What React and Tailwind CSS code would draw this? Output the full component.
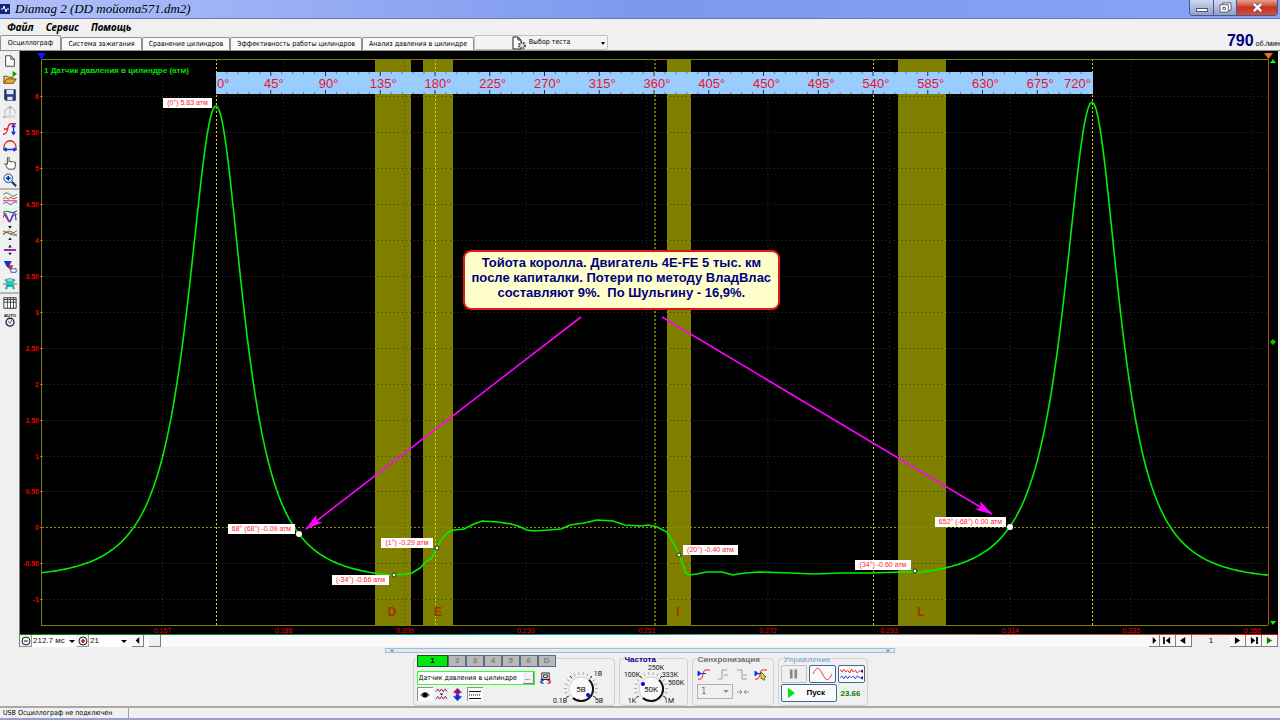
import React, { useState } from 'react';

const menuItems = ['Файл', 'Сервис', 'Помощь'];

const tabs = [
  { name: 'Осциллограф', width: 'w-[61px]' },
  { name: 'Система зажигания', width: 'w-[81px]' },
  { name: 'Сравнение цилиндров', width: 'w-[88px]' },
  { name: 'Эффективность работы цилиндров', width: 'w-[132px]' },
  { name: 'Анализ давления в цилиндре', width: 'w-[112px]' },
];

const BASE_Y = 527;
const UNIT = 72;

const bands = [
  { letter: 'D', x: 375, width: 36, tx: 392 },
  { letter: 'E', x: 423, width: 30, tx: 438 },
  { letter: 'I', x: 667, width: 24, tx: 678 },
  { letter: 'L', x: 898, width: 48, tx: 921 },
];

const strokes = [216.5, 435.5, 655, 873.5, 1092.5];

const timeLabels = ['0.167', '0.188', '0.209', '0.230', '0.251', '0.272', '0.293', '0.314', '0.335', '0.356'];

const marks = [
  { text: '(0°) 5.83 атм', x: 163, y: 98, width: 49, px: 216, py: 107, hidden: true },
  { text: '68° (68°) -0.09 атм', x: 228, y: 524, width: 67, px: 299, py: 534, big: true },
  { text: '(-34°) -0.66 атм', x: 332, y: 575, width: 57, px: 394, py: 575 },
  { text: '(1°) -0.29 атм', x: 381, y: 538, width: 52, px: 437, py: 548 },
  { text: '(20°) -0.40 атм', x: 683, y: 545, width: 55, px: 679, py: 555 },
  { text: '(34°) -0.60 атм', x: 855, y: 560, width: 56, px: 915, py: 571 },
  { text: '652° (-68°) 0.00 атм', x: 935, y: 517, width: 71, px: 1010, py: 527, big: true },
];

// intake / exhaust part of the cycle, between the two compression peaks
const valley = [
  [394, 575], [407, 574], [412, 573], [420, 568], [427, 561], [431, 559], [437, 548], [441, 540],
  [446, 534], [450, 531], [455, 530], [464, 529], [474, 524], [482, 521], [498, 522], [511, 524],
  [518, 526], [527, 530], [534, 531], [549, 530], [561, 529], [570, 525], [584, 523], [597, 520],
  [613, 521], [625, 525], [640, 526], [648, 525], [657, 527], [667, 532], [674, 544], [681, 560],
  [686, 573], [689, 575], [697, 574], [706, 572], [722, 572], [733, 575], [745, 573], [760, 572],
  [790, 573], [815, 574], [840, 573], [870, 573], [902, 572], [914, 572],
];

// polytropic compression around top dead centre
const pressure = (dx, peak, ratio) => {
  const a = (dx * 0.822 * Math.PI) / 180;
  const volume = 1 + ratio * (1 - Math.cos(a) + Math.sin(a) ** 2 / 7);
  return peak / volume ** 1.3 - 1;
};

const buildCurve = () => {
  const points = [];
  for (let x = 41; x < 394; x += 2) {
    points.push([x, BASE_Y - UNIT * pressure(x - 216, 6.85, x < 216 ? 4.6 : 5)]);
  }
  points.push(...valley);
  for (let x = 916; x <= 1268; x += 2) {
    points.push([x, BASE_Y - UNIT * pressure(x - 1092, 6.9, x < 1092 ? 4.6 : 5)]);
  }
  return points.map(([x, y]) => `${x},${y.toFixed(1)}`).join(' ');
};

const yTicks = Array.from({ length: 15 }, (_, i) => {
  const value = 6 - i * 0.5;
  return { y: Math.round(96 + i * 35.95) + 0.5, label: Number.isInteger(value) ? String(value) : value.toFixed(2) };
});

const Chart = () => (
  <svg viewBox="20 51 1258 583" className="block w-full h-auto bg-black" role="img" aria-label="Давление в цилиндре">
    <defs>
      <marker id="arrow" viewBox="0 0 18 10" refX="17" refY="5" markerWidth="18" markerHeight="10" markerUnits="userSpaceOnUse" orient="auto">
        <path d="M0 0 18 5 0 10 4 5Z" fill="#ff00ff" />
      </marker>
    </defs>
    {bands.map((b) => (
      <rect key={b.letter} x={b.x} y="59" width={b.width} height="566" fill="#808000" />
    ))}
    <g stroke="#343434" strokeDasharray="1 3">
      {yTicks.map((t) => (
        <line key={t.y} x1="42" x2="1268" y1={t.y} y2={t.y} />
      ))}
      {timeLabels.map((t, i) => (
        <line key={t} x1={162.5 + i * 121.1} x2={162.5 + i * 121.1} y1="62" y2="625" />
      ))}
    </g>
    <line x1="42" x2="1268" y1="527.5" y2="527.5" stroke="#909000" strokeDasharray="2 2" />
    <g stroke="#d8d800" strokeDasharray="2 2">
      {strokes.map((x) => (
        <line key={x} x1={x} x2={x} y1="59" y2="625" />
      ))}
    </g>
    <path d="M41.5 625V59.5H1268M41 625.5h1227" fill="none" stroke="#808000" />
    <line x1="1268.5" x2="1268.5" y1="56" y2="625" stroke="#b04a10" />
    <g fill="#f00000" fontFamily="Liberation Sans, sans-serif" fontSize="7">
      {yTicks.map((t) => (
        <text key={t.y} x="39" y={t.y + 2} textAnchor="end" fontWeight="bold">{t.label}</text>
      ))}
      {timeLabels.map((t, i) => (
        <text key={t} x={162.5 + i * 121.1} y="633" textAnchor="middle">{t}</text>
      ))}
    </g>
    <g stroke="#808000">
      {yTicks.map((t) => (
        <line key={t.y} x1="40" x2="43" y1={t.y} y2={t.y} />
      ))}
    </g>
    {bands.map((b) => (
      <text key={b.letter} x={b.tx} y="616" textAnchor="middle" fill="#a83000" fontFamily="Liberation Sans, sans-serif" fontSize="12" fontWeight="bold">
        {b.letter}
      </text>
    ))}
    <text x="44" y="73" fill="#00e000" fontFamily="Liberation Sans, sans-serif" fontSize="8" fontWeight="bold">
      1 Датчик давления в цилиндре (атм)
    </text>

    {/* Crank angle ruler */}
    <rect x="216" y="72" width="877" height="22" fill="#99ccff" />
    {Array.from({ length: 79 }, (_, i) => {
      const x = 216 + (i + 1) * 10.95;
      const major = (i + 1) % 5 === 0;
      return (
        <path
          key={i}
          d={`M${x} 72v${major ? 4 : 2}M${x} 94v${major ? -4 : -2}`}
          stroke={major ? '#203040' : '#5c7a99'}
        />
      );
    })}
    <g fill="#f0102a" fontFamily="Liberation Sans, sans-serif" fontSize="13">
      <text x="217" y="88">0°</text>
      {Array.from({ length: 15 }, (_, i) => (
        <text key={i} x={219 + (i + 1) * 54.75} y="88" textAnchor="middle">{(i + 1) * 45}°</text>
      ))}
      <text x="1091" y="88" textAnchor="end">720°</text>
    </g>

    <polyline points={buildCurve()} fill="none" stroke="#00f000" strokeWidth="1.6" />

    {/* Measured points */}
    {marks.map((m) => (
      <g key={m.text}>
        <rect x={m.x} y={m.y} width={m.width} height="10" fill="#fff" />
        <text x={m.x + m.width / 2} y={m.y + 7} textAnchor="middle" fill="#ff2030" fontFamily="Liberation Sans, sans-serif" fontSize="7">
          {m.text}
        </text>
        {m.hidden ? (
          <path d="M213 110 216.500 107l3 3" fill="none" stroke="#008000" />
        ) : (
          <circle cx={m.px} cy={m.py} r={m.big ? 3 : 2} fill="#fff" stroke="#222" strokeWidth={m.big ? 0 : 1} />
        )}
      </g>
    ))}

    <g stroke="#ff00ff" strokeWidth="1.6">
      <line x1="581" y1="317" x2="306" y2="529" markerEnd="url(#arrow)" />
      <line x1="662" y1="317" x2="992" y2="514" markerEnd="url(#arrow)" />
    </g>

    <path d="M37 53h9l-4.500 7Z" fill="#1414e6" />
    <path d="M1264 53h9l-4.500 6Z" fill="#f07020" />
    <path d="M1270 63h6l-3-4Z" fill="#00ff00" />
    <path d="M1270 342l3-3 3 3-3 3Z" fill="#00c800" />
    <path d="M1270 621h6l-3 4Z" fill="#00ff00" />
  </svg>
);

const Icon = ({ children }) => (
  <svg viewBox="0 0 16 16" width="14" height="14" fill="none">{children}</svg>
);

const toolIcons = [
  ['Новый', <path d="M3 2h6l4 4v8H3ZM9 2v4h4" fill="#fff" stroke="#333" />],
  ['Открыть', <><path d="M1 14V6h4l1 1h5v2" fill="#f8d060" stroke="#604000" /><path d="M1 14l3-5h11l-3 5Z" fill="#f0a830" stroke="#604000" /><path d="M11 0l5 3-5 4Z" fill="#00a000" /></>],
  ['Сохранить', <><path d="M2 2h12v12H3l-1-1Z" fill="#30358a" stroke="#181c50" /><path d="M4 2h8v5H4ZM5 10h6v4H5Z" fill="#dfe6f5" /></>],
  ['Авто', <><path d="M2 10C2 5 5 3 8 3s6 2 6 7M8 1v9M5 4l3-3 3 3" stroke="#a8a8a8" /><text x="0" y="15" fontSize="5" fill="#999" fontFamily="Liberation Sans">AUTO</text></>],
  ['Амплитуда', <><path d="M0 14c8 0 3-11 9-12h6M1 8h5" stroke="#e02020" strokeWidth="1.5" /><path d="M12 4v9M10 6l2-3 2 3M10 11l2 3 2-3" stroke="#1030e0" strokeWidth="1.5" /></>],
  ['Период', <><path d="M1 11C1 4 5 2 8 2s7 2 7 9" stroke="#e02020" strokeWidth="1.5" /><path d="M2 12h12M4 10l-3 2 3 2M12 10l3 2-3 2" stroke="#1030e0" strokeWidth="1.5" /></>],
  ['Рука', <path d="M6 15l-4-6 1-1 2 2V2l1-1 1 1v5l1-1 2 1 1-1 1 1 2 0v5l-1 3Z" fill="#fff" stroke="#333" />],
  ['Лупа', <><circle cx="6" cy="6" r="5" fill="#c8e8ff" stroke="#204070" /><path d="M3.500 6h5M6 3.500v5" stroke="#0020a0" strokeWidth="1.5" /><path d="M10 10l5 5" stroke="#204060" strokeWidth="2.500" /></>],
  ['Каналы', <><path d="M0 3q4-4 8 0t8-1" stroke="#208040" /><path d="M0 8l3-2 3 2 3-2 3 2 4-2M0 10h16" stroke="#e02020" /><path d="M0 14q3-4 6-1t5 0 5-1" stroke="#2040e0" /></>],
  ['Наложение', <><path d="M0 4c6-5 9 4 16-2" stroke="#208040" strokeWidth="1.3" /><path d="M0 10c3-10 6 11 9 3s4-6 7-7" stroke="#e02020" strokeWidth="1.3" /><path d="M1 7c2-9 5 13 8 5s4-14 6 1" stroke="#2040e0" strokeWidth="1.3" /></>],
  ['Сжать', <><path d="M0 11C5 4 9 4 16 12M0 6c5 0 9 6 16 4" stroke="#208040" /><path d="M0 9c5-5 8 4 16-4" stroke="#e02020" /><path d="M6 0h4L8 3ZM6 16h4l-2-3Z" fill="#111" /></>],
  ['Курсор', <><path d="M1 8h14" stroke="#8010a0" strokeWidth="2" /><path d="M6 5h4L8 2ZM6 11h4l-2 3Z" fill="#111" /></>],
  ['Фильтр', <><path d="M1 1h9L7 7v3L4 7Z" fill="#1030d0" /><path d="M6 6l6 0-4 6Z" fill="#e02020" /><path d="M9 10h6v4H9Z" fill="#fff" stroke="#2040a0" /></>],
  ['Маркеры', <><path d="M2 2l4 2h4l4-2-2 6 2 6h-3l-1-3H6l-1 3H2l2-6Z" fill="#20c8c8" /><path d="M2 4q6-4 12 0M4 10h8" stroke="#208040" /><path d="M0 8h4M12 8h4" stroke="#e02020" /></>],
  ['Таблица', <><path d="M1 2h14v12H1Z" fill="#fff" stroke="#222" /><path d="M1 4h14M1 7h14M5 2v12M8.500 2v12M12 2v12" stroke="#333" /></>],
  ['Авто замер', <><text x="1" y="5" fontSize="5" fontWeight="bold" fill="#111" fontFamily="Liberation Sans">AUTO</text><circle cx="8" cy="10.500" r="4.500" stroke="#222" strokeWidth="1.500" /><path d="M6 9l2 3 2-4" stroke="#2060d0" /></>],
];

const Toolbar = () => (
  <aside className="w-5 shrink-0 pt-px bg-[#f0f0f0] border-r border-[#808080]">
    {toolIcons.map(([label, art], index) => (
      <div key={label} className={index === 8 || index === 14 ? 'border-t-2 border-[#b8b8b8]' : ''}>
        <button aria-label={label} className="flex w-full h-[17px] items-center justify-center">
          <Icon>{art}</Icon>
        </button>
      </div>
    ))}
  </aside>
);

const Dial = ({ width, cx, value, labels, pointer }) => (
  <svg viewBox={`0 0 ${width} 50`} width={width} height="50" className="shrink-0 overflow-visible" fontFamily="Roboto, sans-serif" fontSize="7" fill="#111">
    {Array.from({ length: 16 }, (_, i) => {
      const a = ((150 + i * 16) * Math.PI) / 180;
      return (
        <line
          key={i}
          x1={cx + 14 * Math.cos(a)}
          y1={30 + 14 * Math.sin(a)}
          x2={cx + 17 * Math.cos(a)}
          y2={30 + 17 * Math.sin(a)}
          stroke={i % 5 === 0 ? '#111' : '#a8a8a8'}
        />
      );
    })}
    <circle cx={cx} cy="30" r="12" fill="#fafafa" stroke="#d0d0d0" />
    <path d={`M${cx + 8} 21a12 12 0 0 1 -16 18`} fill="none" stroke="#111" strokeWidth="2" />
    <circle cx={cx + pointer[0]} cy={30 + pointer[1]} r="2" fill="#0000f0" />
    <text x={cx} y="33" fontSize="8" textAnchor="middle">{value}</text>
    {labels.map((l) => (
      <text key={l.t} x={l.x} y={l.y} textAnchor="middle">{l.t}</text>
    ))}
  </svg>
);

const Group = ({ title, titleClass, className, children }) => (
  <fieldset className={`relative h-12 min-w-0 border border-[#d0d0d0] rounded-sm ${className}`}>
    {title && (
      <legend className={`absolute -top-1 left-1 px-px bg-[#f0f0f0] font-['Liberation_Sans',sans-serif] text-[8px] leading-[9px] font-bold ${titleClass}`}>{title}</legend>
    )}
    {children}
  </fieldset>
);

const ControlPanel = () => {
  const [channel, setChannel] = useState('1');

  return (
    <section className="flex justify-center gap-1 pt-1 h-[51px]">
      <Group className="w-[202px] flex">
        <div className="w-[142px] shrink-0 pl-[3px] -mt-1">
          <div className="flex">
            {['1', '2', '3', '4', '5', '6', 'D'].map((c) => (
              <button
                key={c}
                onClick={() => setChannel(c)}
                className={`h-3 border font-['Liberation_Sans',sans-serif] text-[8px] leading-[10px] font-bold ${
                  channel === c ? 'w-8 bg-[#00e810] border-[#205020] text-black' : 'w-[18px] bg-[#b8b8b8] border-[#507090] text-[#808080]'
                }`}
              >
                {c}
              </button>
            ))}
          </div>
          <div className="flex items-center gap-1 mt-1">
            <div className="flex w-[118px] h-[14px] border border-[#30ff30] bg-white">
              <input
                aria-label="Датчик"
                defaultValue="Датчик давления в цилиндре"
                className="flex-1 min-w-0 pl-px text-[7px] leading-[12px] text-black bg-white"
              />
              <button aria-label="Выбор датчика" className="w-[11px] bg-[#f0f0f0] border-r border-b border-[#808080] text-[7px] leading-[8px]">...</button>
            </div>
            <button aria-label="Калибровка">
              <svg viewBox="0 0 14 14" width="13" height="13" fill="none">
                <path d="M3 1h8v7H3ZM5 3h4v3H5ZM2 8h10" stroke="#222" />
                <path d="M5 9c-3 0-4 2-2 3h2" stroke="#1030e0" strokeWidth="1.500" />
                <path d="M9 9c4 0 4 2 2 3H9" stroke="#e02020" strokeWidth="1.500" />
              </svg>
            </button>
          </div>
          <div className="flex gap-[2px] mt-[2px]">
            <button aria-label="Видимость" className="w-4 h-[14px] flex items-center justify-center bg-[#fafafa] border-l border-t border-[#909090]">
              <svg viewBox="0 0 12 10" width="12" height="10"><path d="M1 5q5-6 10 0-5 5-10 0Z" fill="#777" /><circle cx="6" cy="5" r="2.500" fill="#000" /></svg>
            </button>
            <button aria-label="Инверсия" className="w-[14px] h-[14px]">
              <svg viewBox="0 0 14 14" width="13" height="13" fill="none"><path d="M1 4l2-3 2 3 2-3 2 3 2-3 2 3M1 12l2-3 2 3 2-3 2 3 2-3 2 3" stroke="#901080" /><path d="M5 6h4L7 8Z" fill="#111" /></svg>
            </button>
            <button aria-label="Смещение" className="w-[14px] h-[14px]">
              <svg viewBox="0 0 14 14" width="13" height="13"><path d="M7 0l5 5H9v2H5V5H2Z" fill="#901080" /><path d="M7 14l5-5H9V7H5v2H2Z" fill="#1030e0" /></svg>
            </button>
            <button aria-label="Линии" className="w-4 h-[14px] flex items-center justify-center bg-[#fafafa] border-l border-t border-[#909090]">
              <svg viewBox="0 0 12 10" width="12" height="10" stroke="#111"><path d="M0 1.500h12M0 8.500h12" /><path d="M0 5h12" strokeDasharray="1 1" /></svg>
            </button>
          </div>
        </div>
        <Dial
          width={56}
          cx={25}
          value="5В"
          pointer={[7, 6]}
          labels={[{ t: '1В', x: 42, y: 17 }, { t: '0.1В', x: 4, y: 44 }, { t: '5В', x: 43, y: 44 }]}
        />
      </Group>

      <Group title="Частота" titleClass="text-[#000080]" className="w-[69px]">
        <Dial
          width={67}
          cx={31}
          value="50K"
          pointer={[-8, -5]}
          labels={[
            { t: '1K', x: 12, y: 44 },
            { t: '100K', x: 12, y: 18 },
            { t: '250K', x: 36, y: 11 },
            { t: '333K', x: 50, y: 18 },
            { t: '500K', x: 56, y: 26 },
            { t: '1M', x: 49, y: 44 },
          ]}
        />
      </Group>

      <Group title="Синхронизация" titleClass="text-[#707070]" className="w-[82px] pt-2 px-1">
        <div className="flex justify-between">
          {['M1 12c6 2 4-8 7-9h5', 'M2 12h4V3h5M8 8h4', 'M2 3h5v9h5M8 8h4', 'M1 12c6 2 4-8 7-9h5'].map((d, index) => {
            const active = index === 0 || index === 3;
            return (
              <button key={index} aria-label={`Синхронизация ${index + 1}`} className="w-[14px] h-[14px]">
                <svg viewBox="0 0 14 14" width="14" height="14" fill="none">
                  <path d={d} stroke={active ? '#e02020' : '#a0a0a0'} />
                  {active && <path d="M1 4l3 2.500-3 2.500ZM4 6.500h5" fill="#1030f0" stroke="#1030f0" />}
                  {index === 3 && <path d="M7 5l5 5-2 0 1 3-2 0-1-2-1 1Z" fill="#f0e000" stroke="#333" strokeWidth="0.600" />}
                </svg>
              </button>
            );
          })}
        </div>
        <div className="flex items-center gap-1 mt-[3px]">
          <div className="relative">
            <select aria-label="Канал синхронизации" className="appearance-none w-9 h-[15px] pl-1 border border-[#b0b0b0] text-[8px] leading-[12px] text-[#606060]">
              <option>1</option>
            </select>
            <span className="absolute right-1 top-[6px] border-x-[3px] border-t-[3px] border-x-transparent border-t-[#909090] pointer-events-none" />
          </div>
          <svg viewBox="0 0 12 8" width="12" height="8" fill="none"><path d="M0 4h5M3 2l2 2-2 2M12 4H7M9 2L7 4l2 2" stroke="#909090" /></svg>
        </div>
      </Group>

      <Group title="Управление" titleClass="text-[#90b0d8]" className="w-[90px] pt-1 px-[2px]">
        <div className="flex gap-[2px] mt-[2px]">
          <button aria-label="Пауза" className="w-[27px] h-[18px] flex items-center justify-center border border-[#c0c0c0] rounded-xs">
            <svg viewBox="0 0 10 10" width="9" height="10"><path d="M1 0h3v10H1ZM6 0h3v10H6Z" fill="#888" /></svg>
          </button>
          <button aria-label="Один канал" className="w-[27px] h-[18px] flex items-center justify-center bg-[#fafafa] border border-[#406890] rounded-xs">
            <svg viewBox="0 0 22 14" width="21" height="14" fill="none"><path d="M1 7c4-8 6-8 10 0s6 8 10 0" stroke="#f03030" /></svg>
          </button>
          <button aria-label="Все каналы" className="w-[27px] h-[18px] flex items-center justify-center bg-[#fafafa] border border-[#406890] rounded-xs">
            <svg viewBox="0 0 24 14" width="23" height="14" fill="none">
              <path d="M0 2l2 3 2-3 2 3 2-2 2 3 2-4 2 3 2-2 2 3 3-3" stroke="#e82020" />
              <path d="M0 11l2-2 2 3 2-3 2 3 2-3 2 2 2-2 2 3 2-3 3 2" stroke="#2040e8" />
              <path d="M24 2v4l-3-2ZM24 9v4l-3-2Z" fill="#1a1a80" />
            </svg>
          </button>
        </div>
        <div className="flex items-center mt-px font-['Liberation_Sans',sans-serif]">
          <button className="w-14 h-[18px] flex items-center gap-3 pl-[6px] bg-[#fafafa] border border-[#406890] rounded-xs text-[8px] leading-[10px] font-bold text-black">
            <svg viewBox="0 0 8 12" width="7" height="12"><path d="M0 0l8 6-8 6Z" fill="#00e810" /></svg>
            Пуск
          </button>
          <output className="flex-1 pt-[2px] text-center text-[8px] leading-[10px] font-bold text-[#008000]">23.66</output>
        </div>
      </Group>
    </section>
  );
};

const NavButton = ({ label, d, green, className }) => (
  <button aria-label={label} className={`h-3 flex items-center justify-center bg-[#f8f8f8] border-r border-b border-[#808080] ${className}`}>
    <svg viewBox="0 0 10 8" width="9" height="7"><path d={d} fill={green ? '#008000' : '#000'} /></svg>
  </button>
);

const ScrollRow = () => (
  <div className="flex h-3 bg-[#fafafa] font-['Liberation_Sans',sans-serif] text-[8px] leading-[12px] text-[#111]">
    <button aria-label="Уменьшить" className="w-3 flex items-center justify-center bg-[#f0f0f0] border-r border-b border-[#999]">
      <svg viewBox="0 0 10 10" width="10" height="10" fill="none"><circle cx="5" cy="5" r="4" stroke="#222" /><path d="M3 5h4" stroke="#1010a0" /></svg>
    </button>
    <select aria-label="Развёртка" className="appearance-none w-[37px] px-px bg-white">
      <option>212.7 мс</option>
    </select>
    <span className="w-2 self-center"><span className="block w-0 border-x-[3px] border-t-[3px] border-x-transparent border-t-black" /></span>
    <button aria-label="Увеличить" className="w-3 flex items-center justify-center bg-[#f0f0f0] border-r border-b border-[#999]">
      <svg viewBox="0 0 10 10" width="10" height="10" fill="none"><circle cx="5" cy="5" r="4" stroke="#222" /><path d="M3 5h4M5 3v4" stroke="#c01010" strokeWidth="1.500" /></svg>
    </button>
    <select aria-label="Масштаб" className="appearance-none w-8 px-px bg-white">
      <option>21</option>
    </select>
    <span className="w-[11px] self-center"><span className="block w-0 border-x-[3px] border-t-[3px] border-x-transparent border-t-black" /></span>
    <NavButton label="Влево" d="M7 0v8L3 4Z" className="w-3" />
    <button aria-label="Ползунок" className="w-3 ml-[5px] bg-[#f0f0f0] border-r border-b border-[#808080]" />
    <div className="flex-1" />
    <NavButton label="Вправо" d="M3 0v8l4-4Z" className="w-[11px]" />
    <NavButton label="В начало" d="M0 0h2v8H0ZM8 0v8L3 4Z" className="w-4" />
    <NavButton label="Назад" d="M7 0v8L1 4Z" className="w-4" />
    <span className="w-[38px] bg-[#f0f0f0] text-center">1</span>
    <NavButton label="Вперёд" d="M2 0v8l6-4Z" className="w-4" />
    <NavButton label="В конец" d="M8 0h2v8H8ZM2 0v8l5-4Z" className="w-4" />
    <NavButton label="Пуск просмотра" green d="M2 0v8l6-4Z" className="w-4" />
  </div>
);

const App = () => {
  const [tab, setTab] = useState('Осциллограф');

  return (
    <div className="min-h-screen overflow-hidden bg-[#f0f0f0] font-['DejaVu_Sans_Condensed','Liberation_Sans',sans-serif] text-[7px] text-black">
      {/* Title bar */}
      <header className="flex items-center justify-between h-[19px] border-b border-[#6878a8] bg-linear-to-r from-[#b0c0fa] via-[#7c98ee] to-[#88a4f8]">
        <div className="flex items-center gap-[5px]">
          <svg viewBox="0 0 10 10" width="10" height="10"><rect width="10" height="10" fill="#102878" /><path d="M1 5h2l1-3 2 6 1-3h2" fill="none" stroke="#fff" /></svg>
          <h1 className="font-['Liberation_Serif',serif] italic text-[13px] leading-[18px]">Diamag 2 (DD тойота571.dm2)</h1>
        </div>
        <div className="flex self-start h-4 mr-[2px] border border-t-0 border-[#485888] rounded-b-sm overflow-hidden">
          <button aria-label="Свернуть" className="w-6 flex items-center justify-center bg-linear-to-b from-[#d0d8f0] to-[#90a0d0] border-r border-[#485888]">
            <span className="block w-3 h-1 mt-1 bg-white border border-[#505868]" />
          </button>
          <button aria-label="Развернуть" className="w-[23px] flex items-center justify-center bg-linear-to-b from-[#d0d8f0] to-[#90a0d0] border-r border-[#485888]">
            <svg viewBox="0 0 14 12" width="13" height="11" fill="#fff" stroke="#505868"><path d="M4 1h9v8H4Z" /><path d="M1 3h9v8H1Z" /><path d="M4 6h3v2H4Z" /></svg>
          </button>
          <button aria-label="Закрыть" className="w-10 flex items-center justify-center bg-linear-to-b from-[#e0a090] via-[#c83020] to-[#d05040]">
            <svg viewBox="0 0 14 12" width="13" height="11"><path d="M3 2l8 8M11 2l-8 8" stroke="#605060" strokeWidth="4" /><path d="M3 2l8 8M11 2l-8 8" stroke="#fff" strokeWidth="2.500" /></svg>
          </button>
        </div>
      </header>

      {/* Menu */}
      <nav className="flex gap-3 h-4 pl-[7px] font-['Noto_Sans',sans-serif] italic font-bold text-[10px] leading-[15px]">
        {menuItems.map((item) => (
          <button key={item}>{item}</button>
        ))}
      </nav>

      {/* Tabs */}
      <div className="flex items-end h-4 border-b border-[#909090]">
        {tabs.map((t) => (
          <button
            key={t.name}
            onClick={() => setTab(t.name)}
            className={`shrink-0 border border-b-0 border-[#909090] rounded-t-xs leading-[12px] whitespace-nowrap ${t.width} ${
              tab === t.name ? 'h-[15px] bg-[#f4f4f4]' : 'h-[13px] bg-[#fafafa]'
            }`}
          >
            {t.name}
          </button>
        ))}
        <button className="relative flex items-center justify-center gap-[3px] w-[134px] h-[15px] border border-[#c0c0c0] rounded-xs bg-[#f4f4f4]">
          <svg viewBox="0 0 14 14" width="14" height="14" fill="none">
            <path d="M1 1h5l3 3v9H1ZM6 1v3h3" fill="#fff" stroke="#222" />
            <circle cx="10" cy="9.500" r="3" fill="#d0e0d0" stroke="#405040" strokeDasharray="1.500 1" strokeWidth="2" />
          </svg>
          Выбор теста
          <span className="absolute right-[2px] top-[6px] border-x-[2px] border-t-[3px] border-x-transparent border-t-black" />
        </button>
        <p className="flex items-baseline gap-[2px] ml-auto font-['Liberation_Sans',sans-serif] text-[7px] leading-[12px] whitespace-nowrap">
          <strong className="text-[16px] text-[#000080]">790</strong>об./мин
        </p>
      </div>

      {/* Workspace */}
      <main className="flex">
        <Toolbar />
        <div className="flex-1 min-w-0 mr-[2px]">
          <div className="relative">
            <Chart />
            <p className="absolute left-[35.2%] top-[34.1%] w-[317px] h-[60px] pt-[3px] border-2 border-[#e01818] rounded-lg bg-[#ffffcc] text-center font-['Liberation_Sans',sans-serif] text-[13px] leading-[15px] font-bold text-[#000080] whitespace-pre">
              {'Тойота королла. Двигатель 4E-FE 5 тыс. км\nпосле капиталки. Потери по методу ВладВлас\nсоставляют 9%.  По Шульгину - 16,9%.'}
            </p>
          </div>
          <div className="h-px bg-linear-to-r from-[#008000] via-[#00a0a0] to-[#d00000]" />
          <ScrollRow />
        </div>
      </main>

      <div className="flex items-center justify-between w-[510px] h-[5px] mx-auto my-px px-1 border border-[#b0b8c0] bg-[#d8ecfa]">
        <span className="border-x-[2px] border-t-[2px] border-x-transparent border-t-[#3080e0]" />
        <span className="border-x-[2px] border-t-[2px] border-x-transparent border-t-[#3080e0]" />
      </div>

      <ControlPanel />

      <footer className="flex mt-px h-[14px] border-t-2 border-t-[#a8a8a8] border-b-2 border-b-[#98a0d0] leading-[11px]">
        <span className="w-[129px] pl-[3px] border-r border-[#a0a0a0] whitespace-nowrap">USB Осциллограф не подключен</span>
      </footer>
    </div>
  );
};

export default App;
